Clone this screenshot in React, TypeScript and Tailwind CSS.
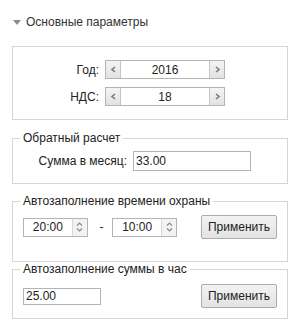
import React from "react";

const font = { fontFamily: '"Liberation Sans", Arial, sans-serif' };

const ChevLeft = () => (
    <svg width="7" height="7" viewBox="0 0 7 7">
        <path d="M5 1 L2 3.5 L5 6" fill="none" stroke="#7a7a7a" strokeWidth="1.6" />
    </svg>
);

const ChevRight = () => (
    <svg width="7" height="7" viewBox="0 0 7 7">
        <path d="M2 1 L5 3.5 L2 6" fill="none" stroke="#7a7a7a" strokeWidth="1.6" />
    </svg>
);

// numeric stepper with < value > buttons
const Stepper = ({ value }: { value: string }) => (
    <div className="flex h-[19px] w-[120px] border border-[#b4b4b4] bg-white">
        <div className="flex w-[15px] items-center justify-center border-r border-[#c4c4c4] bg-gradient-to-b from-[#f4f4f4] to-[#e2e2e2]">
            <ChevLeft />
        </div>
        <div className="flex flex-1 items-center justify-center text-[12px] text-[#222]">{value}</div>
        <div className="flex w-[15px] items-center justify-center border-l border-[#c4c4c4] bg-gradient-to-b from-[#f4f4f4] to-[#e2e2e2]">
            <ChevRight />
        </div>
    </div>
);

// time field with up/down spin arrows
const TimeField = ({ value }: { value: string }) => (
    <div className="flex h-[19px] w-[66px] border border-[#b4b4b4] bg-white">
        <div className="flex flex-1 items-center justify-center text-[12px] text-[#222]">{value}</div>
        <div className="flex w-[15px] flex-col items-center justify-center gap-[2px] border-l border-[#d8d8d8] bg-[#f3f3f3]">
            <svg width="7" height="4" viewBox="0 0 7 4">
                <path d="M1 3.5 L3.5 1 L6 3.5" fill="none" stroke="#8a8a8a" strokeWidth="1.2" />
            </svg>
            <svg width="7" height="4" viewBox="0 0 7 4">
                <path d="M1 0.5 L3.5 3 L6 0.5" fill="none" stroke="#8a8a8a" strokeWidth="1.2" />
            </svg>
        </div>
    </div>
);

const Button = ({ label }: { label: string }) => (
    <button className="flex h-[24px] w-[76px] items-center justify-center rounded-[2px] border border-[#acacac] bg-gradient-to-b from-[#f2f2f2] to-[#e3e3e3] text-[12px] text-[#222]">
        {label}
    </button>
);

// bordered group with a caption sitting on its top edge
const Group = ({ title, children, className }: { title: string; children: React.ReactNode; className?: string }) => (
    <div className={"border border-[#d5d5d5] px-[10px] " + (className ?? "")}>
        <div className="-mt-[8px] -ml-[3px] w-fit bg-white px-[3px] text-[12px] leading-[14px] text-[#222]">{title}</div>
        {children}
    </div>
);

export default function App() {
    return (
        <div className="h-[333px] w-[300px] bg-white px-[12px] text-[#222]" style={font}>
            {/* section header */}
            <div className="flex h-[46px] items-center gap-[5px] pl-[1px] pb-[2px]">
                <svg width="8" height="5" viewBox="0 0 8 5">
                    <path d="M0 0 L8 0 L4 5 Z" fill="#8d8d8d" />
                </svg>
                <span className="text-[12px] text-[#333]">Основные параметры</span>
            </div>

            {/* year / vat */}
            <div className="flex h-[74px] flex-col justify-center gap-[8px] border border-[#d5d5d5]">
                <div className="flex items-center">
                    <span className="w-[87px] pr-[1px] text-right text-[12px]">Год:</span>
                    <span className="ml-[5px]"><Stepper value="2016" /></span>
                </div>
                <div className="flex items-center">
                    <span className="w-[87px] pr-[1px] text-right text-[12px]">НДС:</span>
                    <span className="ml-[5px]"><Stepper value="18" /></span>
                </div>
            </div>

            <Group title="Обратный расчет" className="mt-[18px] h-[46px]">
                <div className="mt-[6px] flex items-center">
                    <span className="w-[110px] pr-[6px] text-right text-[12px]">Сумма в месяц:</span>
                    <div className="flex h-[20px] w-[118px] items-center border border-[#b4b4b4] bg-white pl-[2px] text-[12px]">
                        33.00
                    </div>
                </div>
            </Group>

            <Group title="Автозаполнение времени охраны" className="mt-[17px] h-[61px]">
                <div className="mt-[7px] flex h-[24px] items-center">
                    <TimeField value="20:00" />
                    <span className="w-[25px] pl-[3px] text-center text-[12px]">-</span>
                    <TimeField value="10:00" />
                    <span className="ml-[24px]"><Button label="Применить" /></span>
                </div>
            </Group>

            <Group title="Автозаполнение суммы в час" className="mt-[7px] h-[50px]">
                <div className="mt-[8px] flex h-[24px] items-center justify-between">
                    <div className="flex h-[17px] w-[78px] items-center border border-[#b4b4b4] bg-white pl-[2px] text-[12px]">
                        25.00
                    </div>
                    <Button label="Применить" />
                </div>
            </Group>
        </div>
    );
}
